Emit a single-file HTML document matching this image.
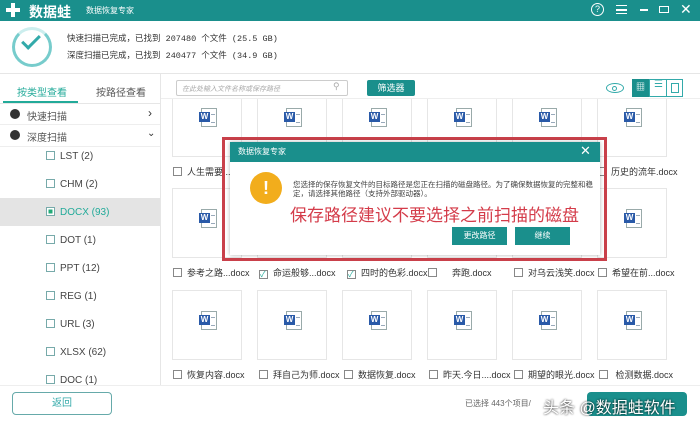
<!DOCTYPE html>
<html><head><meta charset="utf-8"><style>
*{margin:0;padding:0;box-sizing:border-box}
body{width:700px;height:427px;overflow:hidden;background:#fff;font-family:"Liberation Sans","Noto Sans CJK SC",sans-serif;position:relative;color:#333}
.a{position:absolute}
.hdr{left:0;top:0;width:700px;height:21px;background:#1a8f8c}
.tile{position:absolute;width:70px;height:70px;border:1px solid #e6e6e6;background:#fff}
.w{position:absolute;left:28px;top:20px;width:16px;height:19px;border:1px solid #9aa;background:#fff}
.w:before{content:"W";position:absolute;left:-3px;top:3px;width:11px;height:10px;background:#2a5aa8;color:#fff;font-size:8px;font-weight:bold;text-align:center;line-height:10px}
.w:after{content:"";position:absolute;left:9px;top:5px;width:4px;height:7px;border-top:1px solid #9ab;border-bottom:1px solid #9ab}
.lbl{position:absolute;font-size:9px;color:#333;white-space:nowrap}
.cb{display:inline-block;width:9px;height:9px;border:1px solid #888;vertical-align:-1px;margin-right:5px;background:#fff}
.si{position:absolute;left:46px;font-size:10px;color:#444}
.si .cb{border-color:#7aa}
</style></head><body>
<div class="a hdr"></div>
<div class="a" style="left:6px;top:3px;width:14px;height:14px;"><div class="a" style="left:5px;top:0;width:4px;height:14px;background:#fff"></div><div class="a" style="left:0;top:5px;width:14px;height:4px;background:#fff"></div></div>
<div class="a" style="left:29px;top:2px;color:#fff;font-size:14px;font-weight:bold">数据蛙</div>
<div class="a" style="left:86px;top:5px;color:#fff;font-size:8px">数据恢复专家</div>
<div class="a" style="left:591px;top:3px;width:13px;height:13px;border:1.5px solid #fff;border-radius:50%;color:#fff;font-size:9px;text-align:center;line-height:10px">?</div>
<div class="a" style="left:616px;top:5px;width:11px;height:9px;border-top:1.5px solid #fff;border-bottom:1.5px solid #fff"></div><div class="a" style="left:616px;top:9px;width:11px;height:1.5px;background:#fff"></div>
<div class="a" style="left:640px;top:9px;width:8px;height:1.5px;background:#fff"></div>
<div class="a" style="left:659px;top:6px;width:10px;height:7px;border:1.5px solid #fff"></div>
<div class="a" style="left:680px;top:1px;color:#fff;font-size:14px">✕</div>

<div class="a" style="left:12px;top:27px;width:40px;height:40px;border:3px solid #7cc;border-radius:50%;border-top-color:#cee"></div>
<div class="a" style="left:22px;top:35px;width:18px;height:10px;border-left:3px solid #3aa;border-bottom:3px solid #3aa;transform:rotate(-45deg)"></div>
<div class="a" style="left:67px;top:32px;font-size:8.5px;color:#333;font-family:'Liberation Mono','Noto Sans CJK SC',monospace">快速扫描已完成，已找到 207480 个文件 (25.5 GB)</div>
<div class="a" style="left:67px;top:49px;font-size:8.5px;color:#333;font-family:'Liberation Mono','Noto Sans CJK SC',monospace">深度扫描已完成，已找到 240477 个文件 (34.9 GB)</div>
<div class="a" style="left:0;top:73px;width:700px;height:1px;background:#e6e6e6"></div>

<div class="a" style="left:17px;top:84px;font-size:10px;color:#2a9">按类型查看</div>
<div class="a" style="left:96px;top:84px;font-size:10px;color:#555">按路径查看</div>
<div class="a" style="left:3px;top:101px;width:75px;height:2px;background:#2a9"></div>
<div class="a" style="left:0;top:103px;width:160px;height:1px;background:#e6e6e6"></div>
<div class="a" style="left:160px;top:74px;width:1px;height:311px;background:#e6e6e6"></div>
<div class="a" style="left:10px;top:109px;width:10px;height:10px;border-radius:50%;background:#333"></div>
<div class="a" style="left:27px;top:108px;font-size:10px;color:#555">快速扫描</div>
<div class="a" style="left:148px;top:106px;font-size:12px;color:#333">›</div>
<div class="a" style="left:0;top:124px;width:160px;height:1px;background:#eee"></div>
<div class="a" style="left:10px;top:130px;width:10px;height:10px;border-radius:50%;background:#333"></div>
<div class="a" style="left:27px;top:129px;font-size:10px;color:#555">深度扫描</div>
<div class="a" style="left:147px;top:128px;font-size:10px;color:#333">⌄</div>
<div class="a" style="left:0;top:146px;width:160px;height:1px;background:#eee"></div>
<div class="a" style="left:0;top:198px;width:160px;height:28px;background:#e4e4e4"></div>
<div class="si" style="top:151px"><span class="cb"></span>LST (2)</div>
<div class="si" style="top:179px"><span class="cb"></span>CHM (2)</div>
<div class="si" style="top:207px;color:#2a9"><span class="cb" style="background:#2a7;box-shadow:inset 0 0 0 1.5px #fff"></span>DOCX (93)</div>
<div class="si" style="top:235px"><span class="cb"></span>DOT (1)</div>
<div class="si" style="top:263px"><span class="cb"></span>PPT (12)</div>
<div class="si" style="top:291px"><span class="cb"></span>REG (1)</div>
<div class="si" style="top:319px"><span class="cb"></span>URL (3)</div>
<div class="si" style="top:347px"><span class="cb"></span>XLSX (62)</div>
<div class="si" style="top:375px"><span class="cb"></span>DOC (1)</div>

<div class="a" style="left:176px;top:80px;width:172px;height:16px;border:1px solid #ccc;border-radius:2px;font-size:7px;color:#aaa;font-style:italic;padding:3px 5px">在此处输入文件名称或保存路径</div>
<div class="a" style="left:333px;top:81px;font-size:9px;color:#aaa">⚲</div>
<div class="a" style="left:367px;top:80px;width:48px;height:16px;background:#1a8f8c;color:#fff;font-size:9px;text-align:center;line-height:16px;border-radius:2px">筛选器</div>
<div class="a" style="left:606px;top:83px;width:18px;height:10px;border:1.5px solid #3aa;border-radius:50%"></div>
<div class="a" style="left:612px;top:86px;width:5px;height:5px;border:1px solid #3aa;border-radius:50%"></div>
<div class="a" style="left:632px;top:79px;width:17px;height:18px;background:#1a8f8c;color:#fff;font-size:9px;text-align:center;line-height:17px">▦</div>
<div class="a" style="left:649px;top:79px;width:34px;height:18px;border:1px solid #3aa"></div>
<div class="a" style="left:666px;top:79px;width:1px;height:18px;background:#3aa"></div>
<div class="a" style="left:654px;top:79px;font-size:10px;color:#3aa">☰</div>
<div class="a" style="left:671px;top:83px;width:8px;height:10px;border:1px solid #3aa"></div>
<div class="a" style="left:161px;top:98px;width:539px;height:1px;background:#eee"></div>

<div class="a" style="left:161px;top:99px;width:539px;height:286px;overflow:hidden">
<div class="tile" style="left:11px;top:-12px"><div class="w"></div></div>
<div class="tile" style="left:96px;top:-12px"><div class="w"></div></div>
<div class="tile" style="left:181px;top:-12px"><div class="w"></div></div>
<div class="tile" style="left:266px;top:-12px"><div class="w"></div></div>
<div class="tile" style="left:351px;top:-12px"><div class="w"></div></div>
<div class="tile" style="left:436px;top:-12px"><div class="w"></div></div>
<div class="lbl" style="left:12px;top:66px"><span class="cb"></span>人生需要...docx</div>
<div class="lbl" style="left:436px;top:66px"><span class="cb"></span>历史的流年.docx</div>
<div class="tile" style="left:11px;top:89px"><div class="w"></div></div>
<div class="tile" style="left:96px;top:89px"><div class="w"></div></div>
<div class="tile" style="left:181px;top:89px"><div class="w"></div></div>
<div class="tile" style="left:266px;top:89px"><div class="w"></div></div>
<div class="tile" style="left:351px;top:89px"><div class="w"></div></div>
<div class="tile" style="left:436px;top:89px"><div class="w"></div></div>
<div class="lbl" style="left:12px;top:167px"><span class="cb"></span>参考之路...docx</div>
<div class="lbl" style="left:98px;top:167px"><span class="cb" style="font-size:8px;line-height:7px;color:#2a9">✓</span>命运般够...docx</div>
<div class="lbl" style="left:186px;top:167px"><span class="cb" style="font-size:8px;line-height:7px;color:#2a9">✓</span>四时的色彩.docx</div>
<div class="lbl" style="left:267px;top:167px"><span class="cb"></span>&nbsp;&nbsp;&nbsp;&nbsp;奔跑.docx</div>
<div class="lbl" style="left:353px;top:167px"><span class="cb"></span>对乌云浅笑.docx</div>
<div class="lbl" style="left:437px;top:167px"><span class="cb"></span>希望在前...docx</div>
<div class="tile" style="left:11px;top:191px"><div class="w"></div></div>
<div class="tile" style="left:96px;top:191px"><div class="w"></div></div>
<div class="tile" style="left:181px;top:191px"><div class="w"></div></div>
<div class="tile" style="left:266px;top:191px"><div class="w"></div></div>
<div class="tile" style="left:351px;top:191px"><div class="w"></div></div>
<div class="tile" style="left:436px;top:191px"><div class="w"></div></div>
<div class="lbl" style="left:12px;top:269px"><span class="cb"></span>恢复内容.docx</div>
<div class="lbl" style="left:98px;top:269px"><span class="cb"></span>拜自己为师.docx</div>
<div class="lbl" style="left:183px;top:269px"><span class="cb"></span>数据恢复.docx</div>
<div class="lbl" style="left:268px;top:269px"><span class="cb"></span>昨天.今日....docx</div>
<div class="lbl" style="left:353px;top:269px"><span class="cb"></span>期望的眼光.docx</div>
<div class="lbl" style="left:438px;top:269px"><span class="cb"></span>&nbsp;检测数据.docx</div>
</div>

<div class="a" style="left:0;top:385px;width:700px;height:1px;background:#eee"></div>
<div class="a" style="left:12px;top:392px;width:100px;height:23px;border:1px solid #6aa;border-radius:4px;font-size:10px;color:#3aa;text-align:center;line-height:21px">返回</div>
<div class="a" style="left:465px;top:398px;font-size:8px;color:#666">已选择 443个项目/</div>
<div class="a" style="left:587px;top:392px;width:100px;height:24px;background:#1a8f8c;border-radius:4px"></div>
<div class="a" style="left:543px;top:394px;font-size:16px;color:#fff;text-shadow:0 0 2px #000;white-space:nowrap">头条 @数据蛙软件</div>

<div class="a" style="left:222px;top:137px;width:385px;height:124px;border:3px solid #c9404a"></div>
<div class="a" style="left:230px;top:142px;width:370px;height:113px;background:#fff;box-shadow:0 0 4px rgba(0,0,0,.3)"></div>
<div class="a" style="left:230px;top:142px;width:370px;height:20px;background:#1a8f8c"></div>
<div class="a" style="left:238px;top:146px;font-size:8px;color:#fff">数据恢复专家</div>
<div class="a" style="left:580px;top:143px;font-size:13px;color:#fff">✕</div>
<div class="a" style="left:250px;top:172px;width:32px;height:32px;border-radius:50%;background:#f2ad1c;color:#fff;font-size:18px;font-weight:bold;text-align:center;line-height:32px">!</div>
<div class="a" style="left:293px;top:180px;width:300px;font-size:7.5px;color:#444;line-height:9px">您选择的保存恢复文件的目标路径是您正在扫描的磁盘路径。为了确保数据恢复的完整和稳定，请选择其他路径（支持外部驱动器）。</div>
<div class="a" style="left:290px;top:201px;font-size:17px;color:#d43c4a;white-space:nowrap">保存路径建议不要选择之前扫描的磁盘</div>
<div class="a" style="left:452px;top:227px;width:55px;height:18px;background:#1a8f8c;color:#fff;font-size:8px;text-align:center;line-height:18px">更改路径</div>
<div class="a" style="left:515px;top:227px;width:55px;height:18px;background:#1a8f8c;color:#fff;font-size:8px;text-align:center;line-height:18px">继续</div>
</body></html>
